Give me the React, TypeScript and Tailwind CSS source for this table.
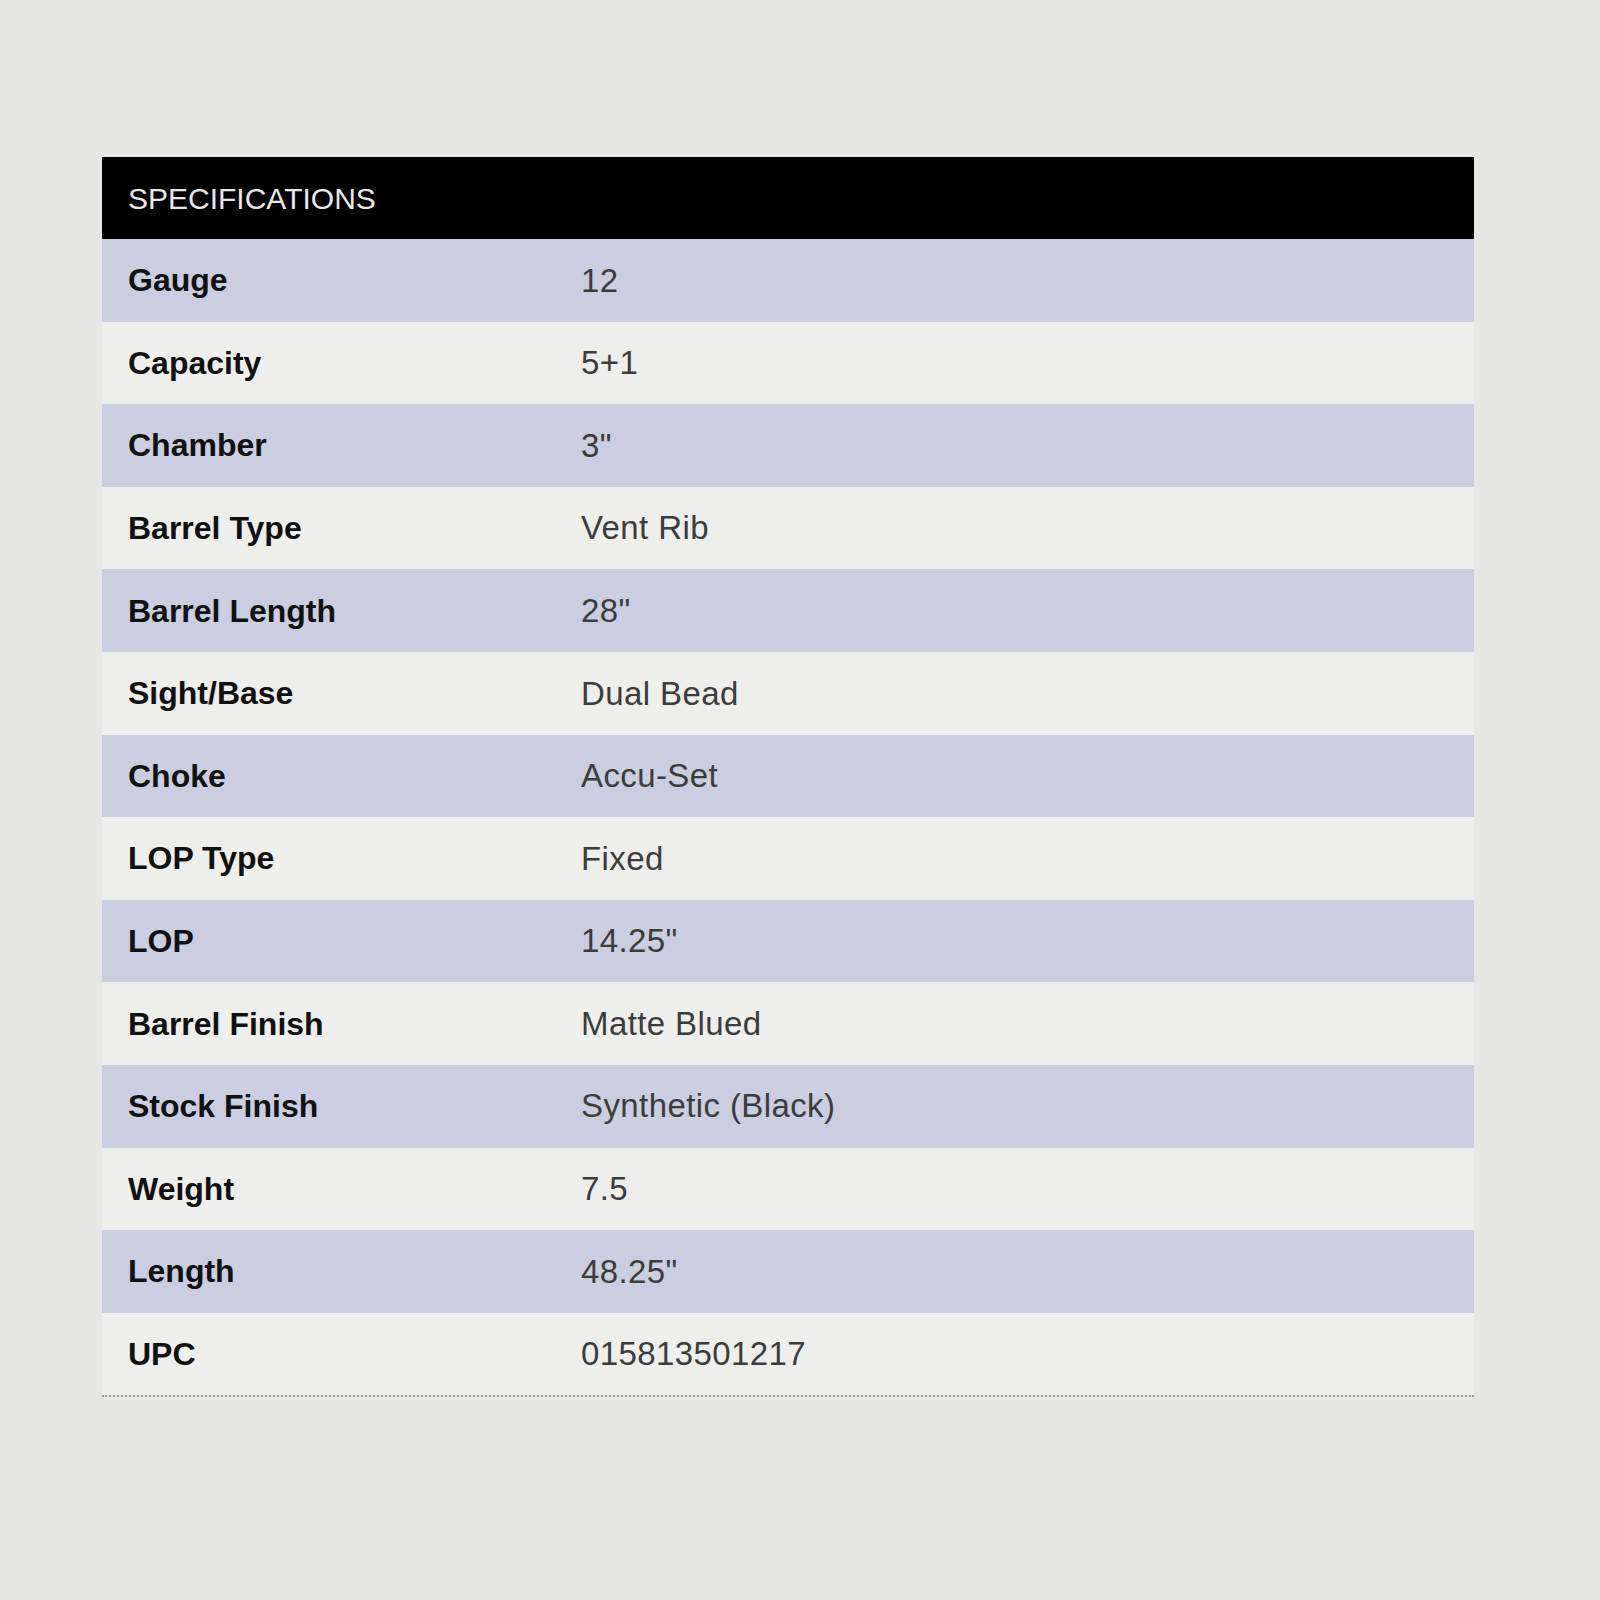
import React from 'react';

const specs: [string, string][] = [
  ['Gauge', '12'],
  ['Capacity', '5+1'],
  ['Chamber', '3"'],
  ['Barrel Type', 'Vent Rib'],
  ['Barrel Length', '28"'],
  ['Sight/Base', 'Dual Bead'],
  ['Choke', 'Accu-Set'],
  ['LOP Type', 'Fixed'],
  ['LOP', '14.25"'],
  ['Barrel Finish', 'Matte Blued'],
  ['Stock Finish', 'Synthetic (Black)'],
  ['Weight', '7.5'],
  ['Length', '48.25"'],
  ['UPC', '015813501217'],
];

const App: React.FC = () => {
  return (
    <div className="min-h-[1600px] w-[1600px] bg-[#e7e7e5] pt-[157px] font-['Liberation_Sans',Arial,sans-serif]">
      <div className="ml-[102px] w-[1372px]">
        {/* header bar */}
        <div className="flex h-[82px] items-center bg-black pl-[26px] text-[30px] text-[#e8e8e8]">
          SPECIFICATIONS
        </div>

        <div className="border-b-2 border-dotted border-[#9a9a9a]">
          {specs.map(([label, value], i) => (
            <div
              key={label}
              className={`flex h-[82.6px] items-center pl-[26px] ${i % 2 === 0 ? 'bg-[#cbcde0]' : 'bg-[#eeeeec]'}`}
            >
              <div className="w-[453px] text-[32px] font-bold text-[#111111]">{label}</div>
              <div className="text-[33px] tracking-[0.4px] text-[#3c3c3c]">{value}</div>
            </div>
          ))}
        </div>
      </div>
    </div>
  );
};

export default App;
